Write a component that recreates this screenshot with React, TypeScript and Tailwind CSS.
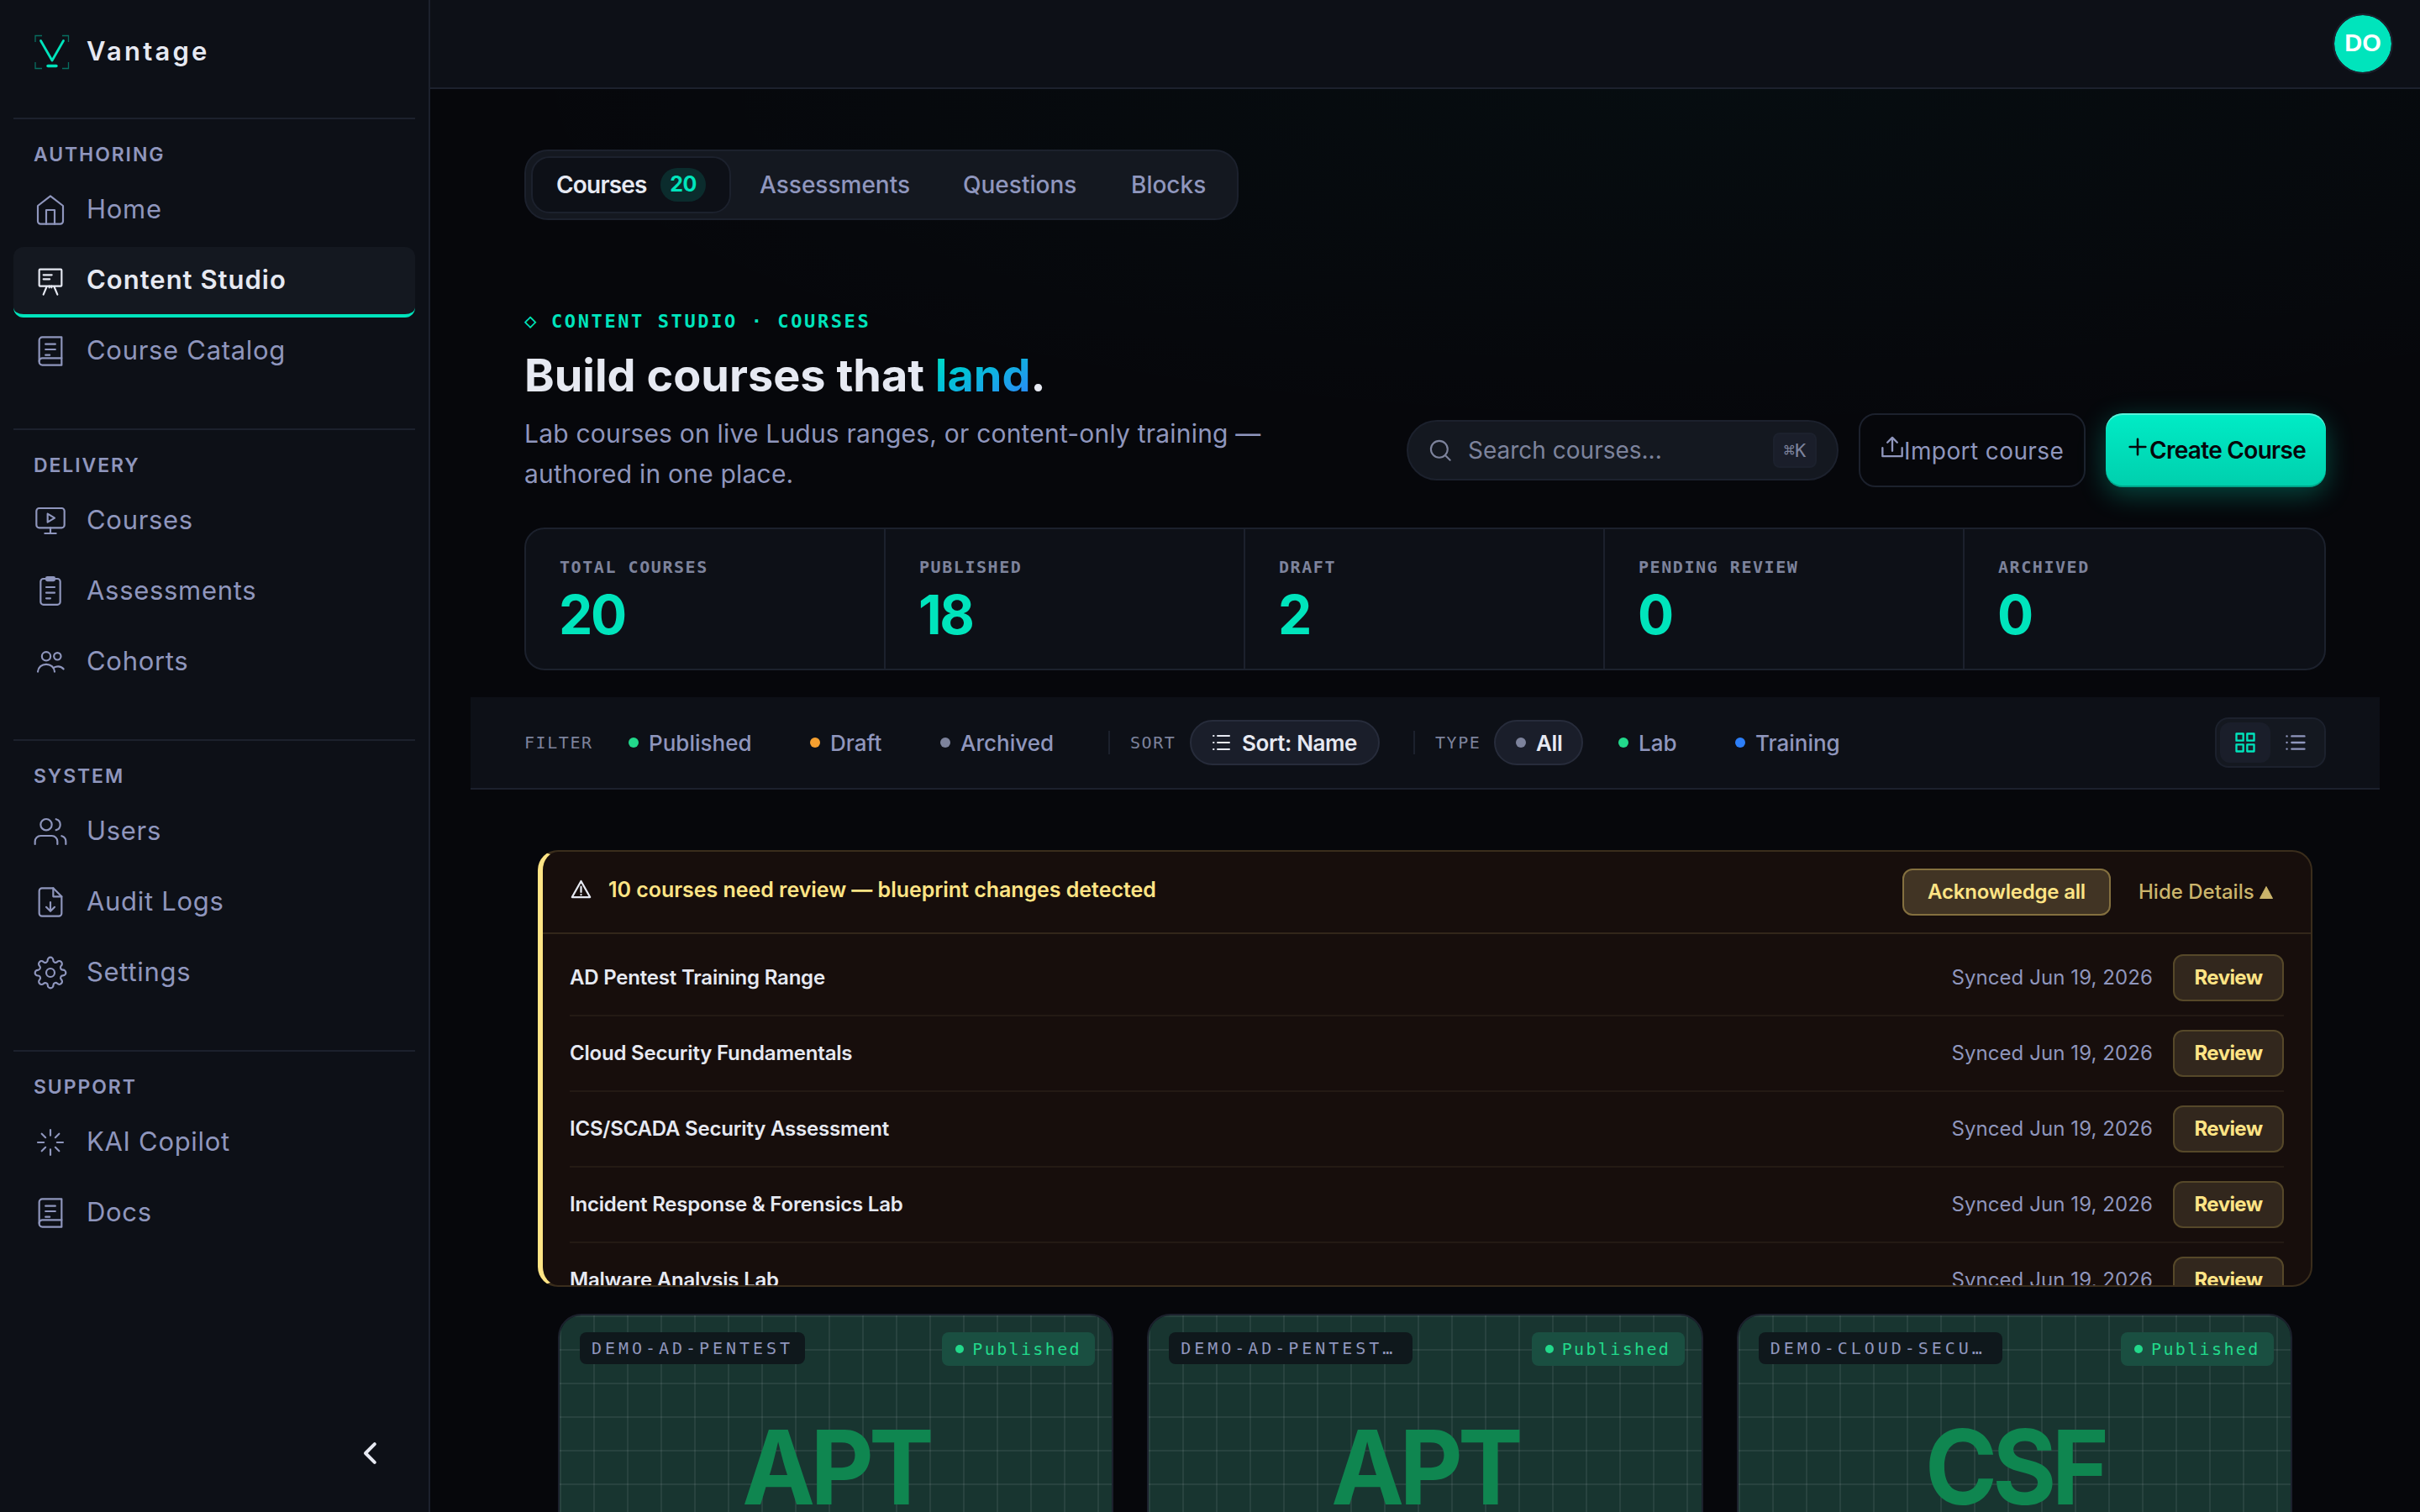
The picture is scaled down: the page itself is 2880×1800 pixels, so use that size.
import type { ReactNode } from "react";
import clsx from "clsx";

function Icon({ children, className }: { children: ReactNode; className?: string }) {
  return (
    <svg
      viewBox="0 0 24 24"
      fill="none"
      stroke="currentColor"
      strokeWidth={1.3}
      strokeLinecap="round"
      strokeLinejoin="round"
      className={clsx("shrink-0", className ?? "size-10")}
    >
      {children}
    </svg>
  );
}

const bookIcon = (
  <>
    <path d="M4 19.2A2.2 2.2 0 0 1 6.2 17H20" />
    <path d="M6.2 2H20v20H6.2A2.2 2.2 0 0 1 4 19.8V4.2A2.2 2.2 0 0 1 6.2 2z" />
    <path d="M8.5 7h7M8.5 10.8h7M8.5 14.8h3" />
  </>
);

const sections = [
  {
    title: "AUTHORING",
    items: [
      {
        label: "Home",
        icon: (
          <>
            <path d="M3 9l9-7 9 7v11a2 2 0 0 1-2 2H5a2 2 0 0 1-2-2z" />
            <path d="M9 22V12h6v10" />
          </>
        ),
      },
      {
        label: "Content Studio",
        active: true,
        icon: (
          <>
            <rect x="4" y="4" width="16" height="12" rx="0.6" />
            <path d="M7 8h6M7 11h4.5M9.4 16.2L7 22M14.6 16.2L17 22M11.2 16v1M12.8 16v1" />
          </>
        ),
      },
      { label: "Course Catalog", icon: bookIcon },
    ],
  },
  {
    title: "DELIVERY",
    items: [
      {
        label: "Courses",
        icon: (
          <>
            <rect x="2" y="3" width="20" height="14" rx="2" />
            <path d="M8 21h8M12 17v4M10 7l5 3-5 3z" />
          </>
        ),
      },
      {
        label: "Assessments",
        icon: (
          <>
            <rect x="5" y="3" width="14" height="18.5" rx="2" />
            <rect x="9" y="1.9" width="6" height="2.4" rx="0.8" fill="currentColor" />
            <path d="M9 9h6M9 13h6M9 17h3" />
          </>
        ),
      },
      {
        label: "Cohorts",
        icon: (
          <>
            <circle cx="9" cy="8" r="3.1" />
            <circle cx="17" cy="8" r="2.5" />
            <path d="M3 19c.3-3.3 2.9-5.3 6-5.3s5.7 2 6 5.3M14.6 16c.9-.6 1.8-.8 2.9-.8 1.6 0 2.9.6 3.9 1.9" />
          </>
        ),
      },
    ],
  },
  {
    title: "SYSTEM",
    items: [
      {
        label: "Users",
        icon: (
          <>
            <path d="M17 21v-2a4 4 0 0 0-4-4H5a4 4 0 0 0-4 4v2" />
            <circle cx="9" cy="7" r="4" />
            <path d="M23 21v-2a4 4 0 0 0-3-3.87M16 3.13a4 4 0 0 1 0 7.75" />
          </>
        ),
      },
      {
        label: "Audit Logs",
        icon: (
          <>
            <path d="M14 2H6a2 2 0 0 0-2 2v16a2 2 0 0 0 2 2h12a2 2 0 0 0 2-2V8z" />
            <path d="M14 2v6h6M12 12v6M9 15.5l3 3 3-3" />
          </>
        ),
      },
      {
        label: "Settings",
        icon: (
          <>
            <circle cx="12" cy="12" r="3" />
            <path d="M19.4 15a1.65 1.65 0 0 0 .33 1.82l.06.06a2 2 0 0 1-2.83 2.83l-.06-.06a1.65 1.65 0 0 0-1.82-.33 1.65 1.65 0 0 0-1 1.51V21a2 2 0 0 1-4 0v-.09A1.65 1.65 0 0 0 9 19.4a1.65 1.65 0 0 0-1.82.33l-.06.06a2 2 0 0 1-2.83-2.83l.06-.06a1.65 1.65 0 0 0 .33-1.82 1.65 1.65 0 0 0-1.51-1H3a2 2 0 0 1 0-4h.09A1.65 1.65 0 0 0 4.6 9a1.65 1.65 0 0 0-.33-1.82l-.06-.06a2 2 0 0 1 2.83-2.83l.06.06a1.65 1.65 0 0 0 1.82.33H9a1.65 1.65 0 0 0 1-1.51V3a2 2 0 0 1 4 0v.09a1.65 1.65 0 0 0 1 1.51 1.65 1.65 0 0 0 1.82-.33l.06-.06a2 2 0 0 1 2.83 2.83l-.06.06a1.65 1.65 0 0 0-.33 1.82V9a1.65 1.65 0 0 0 1.51 1H21a2 2 0 0 1 0 4h-.09a1.65 1.65 0 0 0-1.51 1z" />
          </>
        ),
      },
    ],
  },
  {
    title: "SUPPORT",
    items: [
      {
        label: "KAI Copilot",
        icon: (
          <path d="M12 3v4M12 17v4M3 12h4.3M16.7 12H21M5.8 5.8l2.7 2.7M15.5 15.5l2.7 2.7M5.8 18.2l2.7-2.7M15.5 8.5l2.7-2.7" />
        ),
      },
      { label: "Docs", icon: bookIcon },
    ],
  },
];

function Sidebar() {
  return (
    <aside className="flex h-full w-[512px] shrink-0 flex-col border-r-2 border-[#1c212d] bg-[#0d1017] px-4">
      <div className="flex h-[140px] items-start gap-[19px] pl-6 pt-10">
        <svg viewBox="0 0 44 44" fill="none" className="size-11 shrink-0">
          <path
            d="M2 10V2.5h8M34 2.5h7.5V10M2 34v7.5h8M34 41.5h7.5V34"
            stroke="#00e4bc"
            strokeOpacity="0.45"
            strokeWidth="1.3"
          />
          <path d="M8.5 8.5L22 32 35.5 8.5" stroke="#00e4bc" strokeWidth="2.8" strokeLinecap="round" strokeLinejoin="round" />
          <path d="M17 38.5h10" stroke="#00e4bc" strokeWidth="3.4" strokeLinecap="round" />
        </svg>
        <span className="-mt-px text-[31px] font-semibold leading-[44px] tracking-[3.2px] text-[#e6e9f2]">Vantage</span>
      </div>
      {sections.map((section) => (
        <nav key={section.title} className="mb-12 border-t-2 border-[#1c212d]">
          <h3 className="h-[68px] pl-6 pt-[26px] text-[23px] font-semibold leading-8 tracking-[1.9px] text-[#8f96bd]">
            {section.title}
          </h3>
          {section.items.map((item) => (
            <a
              key={item.label}
              className={clsx(
                "flex h-[84px] items-center gap-[23px] rounded-xl border-b-4 pl-6 text-[31px]",
                item.active
                  ? "border-[#00e4bc] bg-[#141820] font-semibold tracking-[1px] text-[#e6e9f2]"
                  : "border-transparent tracking-[0.7px] text-[#8f96bd]"
              )}
            >
              <Icon>{item.icon}</Icon>
              <span className="-mt-0.5">{item.label}</span>
            </a>
          ))}
        </nav>
      ))}
      <div className="mb-[50px] mt-auto flex justify-end pr-[34px]">
        <Icon className="size-10 text-[#e6e9f2]">
          <path d="M15.5 5.5L9 12l6.5 6.5" strokeWidth={2.4} />
        </Icon>
      </div>
    </aside>
  );
}

const tabs = [
  { label: "Assessments", width: "w-[178px]" },
  { label: "Questions", width: "w-[136px]" },
  { label: "Blocks", width: "w-[89px]" },
];

function Tabs() {
  return (
    <div className="flex h-[84px] w-[850px] gap-1 rounded-[28px] border-2 border-[#1c212d] bg-[#141820] p-1.5 text-[28px] font-medium">
      <div className="flex items-center gap-4 rounded-[22px] border-2 border-[#1c212d] bg-[#0d1017] px-7 text-[#e6e9f2]">
        <span className="w-[108px] whitespace-nowrap font-semibold tracking-[-0.8px]">Courses</span>
        <span className="flex h-10 w-[54px] items-center justify-center rounded-full bg-[#0b2c2d] text-[25px] font-bold tracking-[-0.5px] text-[#00e4bc]">
          20
        </span>
      </div>
      {tabs.map((tab) => (
        <div key={tab.label} className="flex items-center px-[30px] text-[#8f96bd]">
          <span className={clsx("whitespace-nowrap", tab.width)}>{tab.label}</span>
        </div>
      ))}
    </div>
  );
}

function Hero() {
  return (
    <div className="mt-[106px] flex h-[260px] items-end justify-between">
      <div className="h-full">
        <p className="flex h-7 items-center font-['DejaVu_Sans_Mono',monospace] text-[22px] font-bold tracking-[2.6px] text-[#00e4bc]">
          <span className="w-8 text-[24px] font-normal tracking-normal">◇</span>
          CONTENT STUDIO · COURSES
        </p>
        <h1 className="mt-[15px] text-[54px] font-bold leading-[72px] text-[#e6e9f2]">
          Build courses that{" "}
          <span className="bg-gradient-to-br from-[#00e4bc] to-[#2d7ff9] bg-clip-text text-transparent">land</span>.
        </h1>
        <p className="mt-[9px] whitespace-nowrap text-[30px] leading-[48px] tracking-[0.2px] text-[#8f96bd]">
          Lab courses on live Ludus ranges, or content-only training —
          <br />
          authored in one place.
        </p>
      </div>
      <div className="mb-[48px] flex items-center gap-6 text-[28px]">
        <div className="flex h-[72px] w-[514px] items-center rounded-full border-2 border-[#1c212d] bg-[#141820] pl-6 pr-6 text-[#7d839c]">
          <Icon className="size-7">
            <circle cx="11" cy="11" r="8.5" strokeWidth={1.8} />
            <path d="M17.3 17.3L22 22" strokeWidth={1.8} />
          </Icon>
          <span className="ml-[19px] grow">Search courses...</span>
          <span className="flex h-[42px] w-[52px] items-center justify-center rounded-lg border-2 border-[#1c212d] bg-[#1a1e2a] font-['DejaVu_Sans_Mono',monospace] text-[22px]">
            ⌘K
          </span>
        </div>
        <button className="flex h-[88px] w-[270px] items-center rounded-[20px] border-2 border-[#1c212d] pl-6 text-[#8f96bd]">
          <Icon className="-mt-2 size-7">
            <path d="M12 16V2.5M7 7.5l5-5 5 5M2 13v8.5h20V13" strokeWidth={2} />
          </Icon>
          <span className="whitespace-nowrap pt-0.5 tracking-[0.4px]">Import course</span>
        </button>
        <button className="flex h-[88px] w-[262px] items-center rounded-[20px] bg-gradient-to-b from-[#00ecc6] to-[#00cfad] pl-6 font-semibold text-[#06070b] shadow-[0_8px_32px_rgba(0,229,190,0.3),inset_0_2px_0_rgba(255,255,255,0.35),inset_0_-2px_0_rgba(0,0,0,0.2)]">
          <Icon className="-mt-2 size-7">
            <path d="M12 4v16M4 12h16" strokeWidth={2.2} />
          </Icon>
          <span className="whitespace-nowrap tracking-[-0.7px]">Create Course</span>
        </button>
      </div>
    </div>
  );
}

const stats = [
  { label: "TOTAL COURSES", value: "20" },
  { label: "PUBLISHED", value: "18" },
  { label: "DRAFT", value: "2" },
  { label: "PENDING REVIEW", value: "0" },
  { label: "ARCHIVED", value: "0" },
];

function Stats() {
  return (
    <div className="grid h-[170px] grid-cols-5 overflow-hidden rounded-[24px] border-2 border-[#1c212d] bg-[#0d1017]">
      {stats.map((stat) => (
        <div key={stat.label} className="border-r-2 border-[#1c212d] pl-10 pt-[31px] last:border-r-0">
          <p className="font-['DejaVu_Sans_Mono',monospace] text-[20px] font-bold leading-7 tracking-[1.56px] text-[#7d839c]">
            {stat.label}
          </p>
          <p className="-ml-px mt-[7px] text-[64px] font-bold leading-[72px] tracking-[-2.4px] text-[#00e4bc]">
            {stat.value}
          </p>
        </div>
      ))}
    </div>
  );
}

function Chip({ label, width, dot, active }: { label: string; width: string; dot?: string; active?: boolean }) {
  return (
    <div
      className={clsx(
        "flex h-[54px] items-center gap-3 rounded-full border-2 px-6",
        active ? "border-[#272c3b] bg-[#1a1e2a] text-[#e6e9f2]" : "border-transparent text-[#8f96bd]"
      )}
    >
      {dot ? (
        <span className={clsx("size-3 rounded-full", dot)} />
      ) : (
        <Icon className="size-6">
          <path d="M7 4h14M7 12h14M7 20h14M2 4h.5M2 12h.5M2 20h.5" strokeWidth={2} />
        </Icon>
      )}
      <span className={clsx("whitespace-nowrap", active && "font-semibold tracking-[-0.4px]", width)}>{label}</span>
    </div>
  );
}

function BarLabel({ text, width }: { text: string; width: string }) {
  return (
    <span
      className={clsx(
        "font-['DejaVu_Sans_Mono',monospace] text-[20px] font-normal tracking-[1.56px] text-[#7d839c]",
        width
      )}
    >
      {text}
    </span>
  );
}

function FilterBar() {
  return (
    <div className="-mx-16 mt-8 flex h-[110px] items-center justify-between border-b-2 border-[#1c212d] bg-[#0d1017] px-16">
      <div className="flex items-center gap-4 text-[26px] font-medium">
        <BarLabel text="FILTER" width="w-[82px]" />
        <Chip label="Published" width="w-[124px]" dot="bg-[#22d98b]" />
        <Chip label="Draft" width="w-[63px]" dot="bg-[#f5a030]" />
        <Chip label="Archived" width="w-[110px]" dot="bg-[#7d839c]" />
        <span className="ml-6 mr-2 h-7 w-0.5 bg-[#1c212d]" />
        <BarLabel text="SORT" width="w-[55px]" />
        <Chip label="Sort: Name" width="w-[138px]" active />
        <span className="ml-6 mr-2 h-7 w-0.5 bg-[#1c212d]" />
        <BarLabel text="TYPE" width="w-[54px]" />
        <Chip label="All" width="w-[30px]" dot="bg-[#7d839c]" active />
        <Chip label="Lab" width="w-[47px]" dot="bg-[#22d98b]" />
        <Chip label="Training" width="w-[100px]" dot="bg-[#2d7ff9]" />
      </div>
      <div className="flex h-[60px] rounded-2xl border-2 border-[#1c212d] bg-[#141820] p-1">
        <span className="flex h-12 w-[60px] items-center justify-center rounded-xl bg-[#1a1e2a] text-[#00e4bc]">
          <Icon className="size-7">
            <path d="M3 3h7v7H3zM14 3h7v7h-7zM3 14h7v7H3zM14 14h7v7h-7z" strokeWidth={2} />
          </Icon>
        </span>
        <span className="flex h-12 w-[60px] items-center justify-center text-[#8f96bd]">
          <Icon className="size-7">
            <path d="M8 5.5h13M8 12h13M8 18.5h13M3 5.5h.1M3 12h.1M3 18.5h.1" strokeWidth={2} />
          </Icon>
        </span>
      </div>
    </div>
  );
}

const reviews = [
  "AD Pentest Training Range",
  "Cloud Security Fundamentals",
  "ICS/SCADA Security Assessment",
  "Incident Response & Forensics Lab",
  "Malware Analysis Lab",
];

function ReviewAlert() {
  return (
    <div className="mx-4 mt-[72px] h-[520px] overflow-hidden rounded-[24px] border-2 border-l-[6px] border-[#3a2d1c] border-l-[#ffe485] bg-[#170e0c]">
      <div className="flex h-[98px] items-center border-b-2 border-[#32271a] px-8">
        <Icon className="-mt-2 size-[27px] text-[#e6e9f2]">
          <path d="M12 3.5L2.5 20.5h19zM12 9.5v5.5M12 17.8v.1" strokeWidth={2} />
        </Icon>
        <span className="-mt-1 ml-[19px] whitespace-nowrap text-[25px] font-semibold tracking-[-0.04px] text-[#ffe485]">
          10 courses need review — blueprint changes detected
        </span>
        <button className="ml-auto h-14 w-[248px] rounded-xl border-2 border-[#84703f] bg-[#413424] text-[24px] font-semibold tracking-[-0.2px] text-[#ffe485]">
          Acknowledge all
        </button>
        <span className="ml-[33px] flex w-[173px] items-center gap-2 whitespace-nowrap text-[24px] font-medium text-[#cbb46b]">
          <span className="w-[136px]">Hide Details</span>
          <svg viewBox="0 0 16 15" className="h-[15px] w-4" fill="currentColor">
            <path d="M8 0.5L15.5 14.5H0.5z" stroke="currentColor" strokeLinejoin="round" />
          </svg>
        </span>
      </div>
      <ul className="px-8 pt-2">
        {reviews.map((name) => (
          <li key={name} className="flex h-[90px] items-center border-b-2 border-[#241a14] text-[24px]">
            <span className="font-semibold tracking-[-0.2px] text-[#e6e9f2]">{name}</span>
            <span className="ml-auto tracking-[0.08px] text-[#8f96bd]">Synced Jun 19, 2026</span>
            <button className="ml-6 h-14 w-[132px] rounded-xl border-2 border-[#564829] bg-[#32271d] font-bold tracking-[-0.6px] text-[#ffe485]">
              Review
            </button>
          </li>
        ))}
      </ul>
    </div>
  );
}

const courses = [
  { code: "DEMO-AD-PENTEST", initials: "APT", width: "w-[268px]" },
  { code: "DEMO-AD-PENTEST…", initials: "APT", width: "w-[290px]" },
  { code: "DEMO-CLOUD-SECU…", initials: "CSF", width: "w-[290px]" },
];

function CourseGrid() {
  return (
    <div className="mx-10 mt-8 grid grid-cols-3 gap-10">
      {courses.map((course, i) => (
        <article key={i} className="h-[560px] overflow-hidden rounded-[28px] border-2 border-[#1c212d] bg-[#0d1017]">
          <div className="h-[320px] bg-[#183530] bg-[linear-gradient(rgba(255,255,255,0.07)_2px,transparent_2px),linear-gradient(90deg,rgba(255,255,255,0.07)_2px,transparent_2px)] bg-[size:40px_40px] px-6 pt-5 font-['DejaVu_Sans_Mono',monospace] text-[20px]">
            <div className="flex items-start justify-between">
              <span
                className={clsx(
                  "flex h-[38px] items-center rounded-lg bg-[#0f181c] pl-3.5 tracking-[3.96px] text-[#8f96bd]",
                  course.width
                )}
              >
                {course.code}
              </span>
              <span className="-mr-1 flex h-10 w-[182px] items-center gap-2.5 rounded-lg bg-[#1a4f41] pl-4 tracking-[2.36px] text-[#22d98b]">
                <span className="size-2.5 rounded-full bg-[#22d98b]" />
                Published
              </span>
            </div>
            <p className="mt-[57px] scale-x-[0.945] text-center font-['Inter',sans-serif] text-[123px] font-bold leading-[128px] tracking-[-6px] text-[#0f8650]">
              {course.initials}
            </p>
          </div>
        </article>
      ))}
    </div>
  );
}

export default function App() {
  return (
    <div className="flex h-screen w-screen overflow-hidden bg-[#06070b] font-['Inter',sans-serif]">
      <Sidebar />
      <div className="flex min-w-0 grow flex-col">
        <header className="flex h-[106px] shrink-0 items-center justify-end border-b-2 border-[#1c212d] bg-[#0d1017] pr-8">
          <span className="flex size-[72px] items-center justify-center rounded-full border-2 border-[#1c212d] bg-[#00e4bc] bg-clip-padding font-['Liberation_Sans',sans-serif] text-[29px] font-bold text-white">
            DO
          </span>
        </header>
        <main className="min-h-0 grow overflow-hidden bg-[radial-gradient(ellipse_1500px_420px_at_65%_0%,rgba(0,220,200,0.027),transparent)] px-[112px] pt-[72px]">
          <Tabs />
          <Hero />
          <Stats />
          <FilterBar />
          <ReviewAlert />
          <CourseGrid />
        </main>
      </div>
    </div>
  );
}
